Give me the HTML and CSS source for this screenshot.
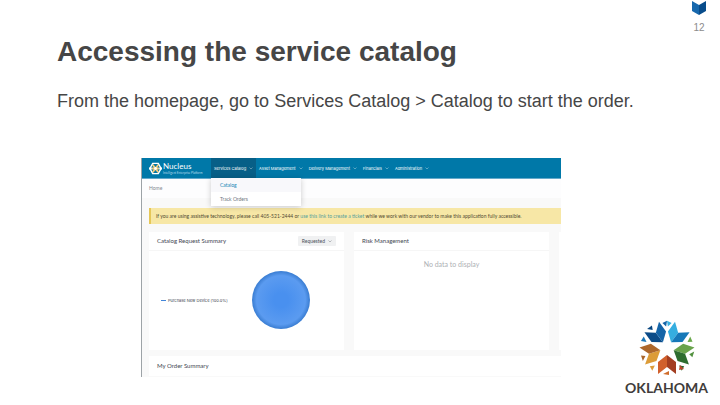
FILE: index.html
```html
<!DOCTYPE html>
<html lang="en">
<head>
<meta charset="utf-8">
<title>Accessing the service catalog</title>
<link rel="stylesheet" href="styles.css">
</head>
<body>
<main class="slide">
  <div class="corner">
    <svg class="corner-mark" viewBox="0 0 16 16" aria-hidden="true">
      <path fill="#1768ad" d="M1 1 8 5V15L1 11Z"/>
      <path fill="#084c8b" d="M15 1 8 5V15L15 11Z"/>
    </svg>
    <span class="page-number">12</span>
  </div>
  <header class="heading">
    <h1>Accessing the service catalog</h1>
    <p>From the homepage, go to Services Catalog &gt; Catalog to start the order.</p>
  </header>
  <section class="stage">
    <div class="app">
      <nav class="bar">
        <a class="brand" href="#">
          <svg class="brand-icon" viewBox="0 0 14 14" aria-hidden="true">
            <path fill="none" stroke="#fff" stroke-width="1.5" d="M4 1.5h6L13 7l-3 5.500H4L1 7Z"/>
            <path stroke="#f0c879" stroke-width="2" d="M4 3l6 8M10 3 4 11M3 7h8"/>
            <circle cx="7" cy="7" r="1.500" fill="#fff"/>
            <path fill="#fff" d="M0 6h3v2H0ZM11 6h3v2h-3Z"/>
          </svg>
          <span class="brand-text"><span class="brand-name">Nucleus</span><span class="brand-tag">Intelligent Enterprise Platform</span></span>
        </a>
        <div class="menu active">
          <a href="#">Services Catalog</a><svg class="chev" viewBox="0 0 4 3"><path d="M.5.5 2 2 3.500.5"/></svg>
          <div class="dropdown">
            <a class="current" href="#">Catalog</a>
            <a href="#">Track Orders</a>
          </div>
        </div>
        <div class="menu"><a href="#">Asset Management</a><svg class="chev" viewBox="0 0 4 3"><path d="M.5.5 2 2 3.500.5"/></svg></div>
        <div class="menu"><a href="#">Delivery Management</a><svg class="chev" viewBox="0 0 4 3"><path d="M.5.5 2 2 3.500.5"/></svg></div>
        <div class="menu"><a href="#">Financials</a><svg class="chev" viewBox="0 0 4 3"><path d="M.5.5 2 2 3.500.5"/></svg></div>
        <div class="menu"><a href="#">Administration</a><svg class="chev" viewBox="0 0 4 3"><path d="M.5.5 2 2 3.500.5"/></svg></div>
      </nav>
      <div class="crumbs">Home</div>
      <div class="content">
        <p class="alert">If you are using assistive technology, please call 405-521-2444 or <a href="#">use this link to create a ticket</a> while we work with our vendor to make this application fully accessible.</p>
        <div class="cards">
          <section class="card">
            <div class="card-head"><h2>Catalog Request Summary</h2><button class="filter" type="button">Requested <svg class="chev" viewBox="0 0 4 3"><path d="M.5.5 2 2 3.500.5"/></svg></button></div>
            <div class="chart">
              <span class="legend">Purchase New Device (100.0%)</span>
              <span class="pie"></span>
            </div>
          </section>
          <section class="card">
            <div class="card-head"><h2>Risk Management</h2></div>
            <p class="empty">No data to display</p>
          </section>
          <section class="card"></section>
        </div>
        <section class="card orders"><h2>My Order Summary</h2></section>
      </div>
    </div>
  </section>
  <div class="state">
    <svg class="state-star" viewBox="-28 -28 56 56" aria-hidden="true">
      <g transform="rotate(-36)"><path fill="#0b4b88" d="M-9-26 0-19V-7L-9-14Z"/><path fill="#1464a8" d="M9-26 0-19V-7L9-14Z"/><path fill="#07457f" d="M-5-27 1-27-1-23Z"/><path fill="#1976b8" d="M-17-21-12-23-13-17Z"/><path fill="#1464a8" d="M11-23 16-22 12-18Z"/></g>
      <g transform="rotate(36)"><path fill="#35aee0" d="M-9-26 0-19V-7L-9-14Z"/><path fill="#1678b8" d="M9-26 0-19V-7L9-14Z"/><path fill="#35aee0" d="M-16-22-11-23-12-18Z"/><path fill="#6aa84b" d="M12-23 17-20 13-17Z"/></g>
      <g transform="rotate(108)"><path fill="#69a34b" d="M-9-26 0-19V-7L-9-14Z"/><path fill="#2e6d2f" d="M9-26 0-19V-7L9-14Z"/><path fill="#52913f" d="M-5-27 1-27-1-23Z"/><path fill="#28652b" d="M12-22 17-21 13-17Z"/></g>
      <g transform="rotate(180)"><path fill="#a33e21" d="M-9-26 0-19V-7L-9-14Z"/><path fill="#d1602c" d="M9-26 0-19V-7L9-14Z"/><path fill="#d06d2c" d="M-2-23 4-26-2-27Z"/><path fill="#b7472a" d="M-12-22-17-21-13-17Z"/></g>
      <g transform="rotate(252)"><path fill="#dc9c38" d="M-9-26 0-19V-7L-9-14Z"/><path fill="#ad672b" d="M9-26 0-19V-7L9-14Z"/><path fill="#dc9c38" d="M-12-22-17-21-13-17Z"/><path fill="#a9652a" d="M-5-27 1-27-1-23Z"/></g>
    </svg>
    <span class="state-name">OKLAHOMA</span>
  </div>
</main>
</body>
</html>
```
FILE: styles.css
```css
* { box-sizing: border-box; }
body { margin: 0; background: #fff; color: #464646; font-family: "Liberation Sans", Arial, sans-serif; }
h1, h2, p { margin: 0; }
a { color: inherit; text-decoration: none; }

.slide { position: relative; min-height: 100vh; padding-top: 34px; }
.corner { position: absolute; top: 0; right: 13px; display: flex; flex-direction: column; align-items: center; }
.corner-mark { width: 16px; height: 16px; }
.page-number { margin-top: 6px; font-size: 10px; line-height: 12px; color: #8c8c8c; }

.heading { padding-left: 57px; }
h1 { font-size: 28px; line-height: 36px; }
.heading p { margin-top: 19px; font-size: 18px; line-height: 24px; }

.stage { display: grid; grid-template-columns: 141fr 420fr 159fr; margin-top: 45px; }
.app { grid-column: 2; min-width: 0; border-left: 1px solid #9da3a7; background: #f9f9f9; font-family: Lato, sans-serif; font-size: 5px; line-height: 7px; color: #3e4651; }

.bar { display: flex; height: 21px; background: #0078a8; border-bottom: 1px solid #65a9ca; color: #fff; }
.brand { display: flex; align-items: center; gap: 1px; width: 69px; padding-left: 7px; }
.brand-icon { width: 13px; height: 13px; }
.brand-text { display: flex; flex-direction: column; }
.brand-name { font-size: 8px; line-height: 10px; }
.brand-tag { font-size: 3px; line-height: 4px; white-space: nowrap; color: #b5dceb; }
.menu { position: relative; display: flex; align-items: center; gap: 3px; padding: 0 3px; font-family: Inter, sans-serif; font-size: 4px; white-space: nowrap; }
.active { background: #075f87; }
.chev { width: 4px; height: 3px; fill: none; stroke: currentColor; stroke-width: 0.5; opacity: .7; }
.dropdown { position: absolute; top: 20px; left: 0; width: 90px; background: #fff; color: #6f7680; box-shadow: 0 1px 6px #0003; font-family: Lato, sans-serif; font-size: 5px; }
.dropdown a { display: block; padding: 4px 9px 3px; line-height: 7px; }
.dropdown .current { background: #f8f8fb; color: #1784b5; }

.crumbs { height: 19px; padding: 6px 7px; background: #fdfdfe; color: #858b92; }
.content { padding: 10px 0 1px 7px; }
.alert { padding: 4px 5px; border-left: 2px solid #e6c757; background: #f7e7a6; color: #514a32; line-height: 8px; white-space: nowrap; }
.alert a { color: #56a19c; }
.cards { display: grid; grid-template-columns: 195fr 195fr 2fr; gap: 10px; margin-top: 8px; }
.card { background: #fff; }
.cards .card { height: 118px; }
.card-head { display: flex; align-items: center; justify-content: space-between; height: 19px; padding: 0 8px; border-bottom: 1px solid #f6f6f6; }
h2 { font-size: 6px; line-height: 8px; font-weight: 400; }
.filter { display: flex; align-items: center; gap: 3px; height: 10px; padding: 0 4px; border: 0; border-radius: 1px; background: #f0f1f2; color: #4b515a; font: 5px Lato, sans-serif; }
.chart { display: flex; align-items: center; justify-content: space-between; height: 98px; padding: 0 34px 0 12px; }
.legend { display: flex; align-items: center; gap: 2px; font-family: Inter, sans-serif; font-size: 4px; }
.legend::before { content: ""; width: 5px; height: 1px; background: #4285d9; }
.pie { width: 58px; height: 58px; border-radius: 50%; background: radial-gradient(circle closest-side, #4990ef 25%, #5b9bf0 84%, #3d80d5 98%); }
.empty { padding-top: 9px; text-align: center; font-size: 7px; line-height: 8px; color: #adb0b4; }
.orders { margin-top: 6px; padding: 6px 8px; }

.state { position: absolute; right: 12px; bottom: 8px; display: flex; flex-direction: column; align-items: center; }
.state-star { width: 56px; height: 56px; }
.state-name { margin-top: 3px; font: 700 14px/18px Lato, sans-serif; color: #413d3b; }
```
